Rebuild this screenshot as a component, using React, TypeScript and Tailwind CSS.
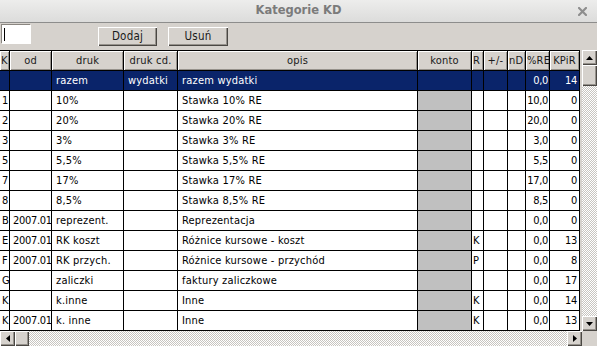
import React from "react";

type Row = {
  k: string;
  od: string;
  druk: string;
  cd: string;
  opis: string;
  r: string;
  re: string;
  kp: string;
  sel?: boolean;
};

const rows: Row[] = [
  { k: "", od: "", druk: "razem", cd: "wydatki", opis: "razem wydatki", r: "", re: "0,0", kp: "14", sel: true },
  { k: "1", od: "", druk: "10%", cd: "", opis: "Stawka 10% RE", r: "", re: "10,0", kp: "0" },
  { k: "2", od: "", druk: "20%", cd: "", opis: "Stawka 20% RE", r: "", re: "20,0", kp: "0" },
  { k: "3", od: "", druk: "3%", cd: "", opis: "Stawka 3% RE", r: "", re: "3,0", kp: "0" },
  { k: "5", od: "", druk: "5,5%", cd: "", opis: "Stawka 5,5% RE", r: "", re: "5,5", kp: "0" },
  { k: "7", od: "", druk: "17%", cd: "", opis: "Stawka 17% RE", r: "", re: "17,0", kp: "0" },
  { k: "8", od: "", druk: "8,5%", cd: "", opis: "Stawka 8,5% RE", r: "", re: "8,5", kp: "0" },
  { k: "B", od: "2007.01", druk: "reprezent.", cd: "", opis: "Reprezentacja", r: "", re: "0,0", kp: "0" },
  { k: "E", od: "2007.01", druk: "RK koszt", cd: "", opis: "Różnice kursowe - koszt", r: "K", re: "0,0", kp: "13" },
  { k: "F", od: "2007.01", druk: "RK przych.", cd: "", opis: "Różnice kursowe - przychód", r: "P", re: "0,0", kp: "8" },
  { k: "G", od: "", druk: "zaliczki", cd: "", opis: "faktury zaliczkowe", r: "", re: "0,0", kp: "17" },
  { k: "K", od: "", druk: "k.inne", cd: "", opis: "Inne", r: "K", re: "0,0", kp: "14" },
  { k: "K", od: "2007.01", druk: "k. inne", cd: "", opis: "Inne", r: "K", re: "0,0", kp: "13" },
];

const FONT = '"DejaVu Sans Condensed", "DejaVu Sans", sans-serif';

function HeaderCell({ w, label, align = "center" }: { w: string; label: string; align?: "center" | "left" }) {
  return (
    <div className={`${w} h-full shrink-0 border-r border-black overflow-hidden`}>
      <div
        className={`h-full flex items-center whitespace-nowrap bg-[#d6d2cd] shadow-[inset_1px_1px_0_#ffffff,inset_-1px_-1px_0_#96928c] text-[#1a1a1a] tracking-[0.2px] ${
          align === "center" ? "justify-center" : "justify-start pl-[1px]"
        }`}
      >
        {label}
      </div>
    </div>
  );
}

function Cell({
  w,
  children,
  right,
  gray,
  sel,
  num,
  pl = "pl-[4px]",
  pr = "pr-[1px]",
}: {
  w: string;
  children?: React.ReactNode;
  right?: boolean;
  gray?: boolean;
  sel?: boolean;
  num?: boolean;
  pl?: string;
  pr?: string;
}) {
  const bg = sel ? "bg-[#0a246a] text-white" : gray ? "bg-[#c0c0c0] text-black" : "bg-white text-black";
  return (
    <div
      className={`${w} h-full shrink-0 border-r border-black overflow-hidden whitespace-nowrap flex items-center ${bg} ${
        right ? `justify-end ${pr}` : `justify-start ${pl}`
      } ${num ? "tracking-[-0.3px]" : "tracking-[0.2px]"}`}
    >
      {children}
    </div>
  );
}

function Bevel({ className, children }: { className: string; children?: React.ReactNode }) {
  return (
    <div
      className={`bg-[#d6d2cd] shadow-[inset_1px_1px_0_#ffffff,inset_-1px_-1px_0_#4a4743,inset_-2px_-2px_0_#96928c] flex items-center justify-center ${className}`}
    >
      {children}
    </div>
  );
}

const checker =
  "bg-[repeating-conic-gradient(#c8c5c0_0%_25%,#ffffff_0%_50%)] bg-[length:2px_2px]";

export default function App() {
  return (
    <div
      className="w-[597px] h-[346px] overflow-hidden bg-[#d6d2cd] flex flex-col text-[11px] leading-none"
      style={{ fontFamily: FONT }}
    >
      {/* title bar */}
      <div className="h-[23px] shrink-0 flex items-center justify-center relative bg-gradient-to-b from-[#ededec] to-[#dcdcdb] border-b border-[#8d8d8c]">
        <span
          className="text-[11.5px] font-bold text-[#7b7b7b]"
          style={{ fontFamily: '"DejaVu Sans", sans-serif' }}
        >
          Kategorie KD
        </span>
        <svg className="absolute right-[10px] top-[7px]" width="9" height="9" viewBox="0 0 9 9">
          <path d="M1 1 L8 8 M8 1 L1 8" stroke="#8e8e8e" strokeWidth="2.2" strokeLinecap="square" />
        </svg>
      </div>

      {/* toolbar */}
      <div className="h-[27px] shrink-0 flex items-start relative">
        <div className="ml-[1px] mt-[1px] w-[29px] h-[19px] bg-white border-t border-l border-[#8a8680] shadow-[1px_1px_0_#ffffff] flex items-center">
          <div className="ml-[2px] w-[1px] h-[13px] bg-black" />
        </div>
        <Bevel className="ml-[68px] mt-[4px] w-[59px] h-[19px] text-[11.5px] tracking-[0.2px] text-[#1a1a1a]">Dodaj</Bevel>
        <Bevel className="ml-[11px] mt-[4px] w-[60px] h-[19px] text-[11.5px] tracking-[0.2px] text-[#1a1a1a]">Usuń</Bevel>
      </div>

      {/* main */}
      <div className="flex-1 flex min-h-0">
        <div className="w-[582px] flex flex-col min-h-0">
          <div className="flex-1 min-h-0 overflow-hidden">
            <div className="w-[580px] border-t border-black">
              <div className="h-[20px] flex border-b border-black">
                <HeaderCell w="w-[10px]" label="K" align="left" />
                <HeaderCell w="w-[42px]" label="od" />
                <HeaderCell w="w-[72px]" label="druk" />
                <HeaderCell w="w-[54px]" label="druk cd." />
                <HeaderCell w="w-[240px]" label="opis" />
                <HeaderCell w="w-[54px]" label="konto" />
                <HeaderCell w="w-[12px]" label="R" align="left" />
                <HeaderCell w="w-[24px]" label="+/-" />
                <HeaderCell w="w-[18px]" label="nD" align="left" />
                <HeaderCell w="w-[24px]" label="%RE" align="left" />
                <HeaderCell w="w-[30px]" label="KPiR" />
              </div>
              {rows.map((r, i) => (
                <div key={i} className="h-[20px] flex border-b border-black">
                  <Cell w="w-[10px]" sel={r.sel} pl="pl-[2px]">{r.k}</Cell>
                  <Cell w="w-[42px]" sel={r.sel} num pl="pl-[3px]">{r.od}</Cell>
                  <Cell w="w-[72px]" sel={r.sel}>{r.druk}</Cell>
                  <Cell w="w-[54px]" sel={r.sel}>{r.cd}</Cell>
                  <Cell w="w-[240px]" sel={r.sel}>{r.opis}</Cell>
                  <Cell w="w-[54px]" sel={r.sel} gray />
                  <Cell w="w-[12px]" sel={r.sel} pl="pl-[1px]">{r.r}</Cell>
                  <Cell w="w-[24px]" sel={r.sel} />
                  <Cell w="w-[18px]" sel={r.sel} />
                  <Cell w="w-[24px]" sel={r.sel} right num pr="pr-[1px]">{r.re}</Cell>
                  <Cell w="w-[30px]" sel={r.sel} right num pr="pr-[2px]">{r.kp}</Cell>
                </div>
              ))}
            </div>
          </div>
          {/* horizontal scrollbar */}
          <div className={`h-[15px] shrink-0 flex ${checker}`}>
            <Bevel className="w-[15px] h-full">
              <svg width="4" height="7" viewBox="0 0 4 7">
                <path d="M4 0 L0 3.5 L4 7 Z" fill="#000" />
              </svg>
            </Bevel>
            <Bevel className="w-[14px] h-full" />
            <div className="flex-1" />
            <Bevel className="w-[15px] h-full">
              <svg width="4" height="7" viewBox="0 0 4 7">
                <path d="M0 0 L4 3.5 L0 7 Z" fill="#000" />
              </svg>
            </Bevel>
          </div>
        </div>
        {/* vertical scrollbar */}
        <div className="w-[15px] flex flex-col">
          <div className={`flex-1 flex flex-col ${checker}`}>
            <Bevel className="h-[15px] w-full">
              <svg width="7" height="4" viewBox="0 0 7 4">
                <path d="M0 4 L3.5 0 L7 4 Z" fill="#000" />
              </svg>
            </Bevel>
            <Bevel className="h-[21px] w-full" />
            <div className="flex-1" />
            <Bevel className="h-[15px] w-full">
              <svg width="7" height="4" viewBox="0 0 7 4">
                <path d="M0 0 L3.5 4 L7 0 Z" fill="#000" />
              </svg>
            </Bevel>
          </div>
          <div className="h-[15px] bg-[#d6d2cd]" />
        </div>
      </div>
    </div>
  );
}
